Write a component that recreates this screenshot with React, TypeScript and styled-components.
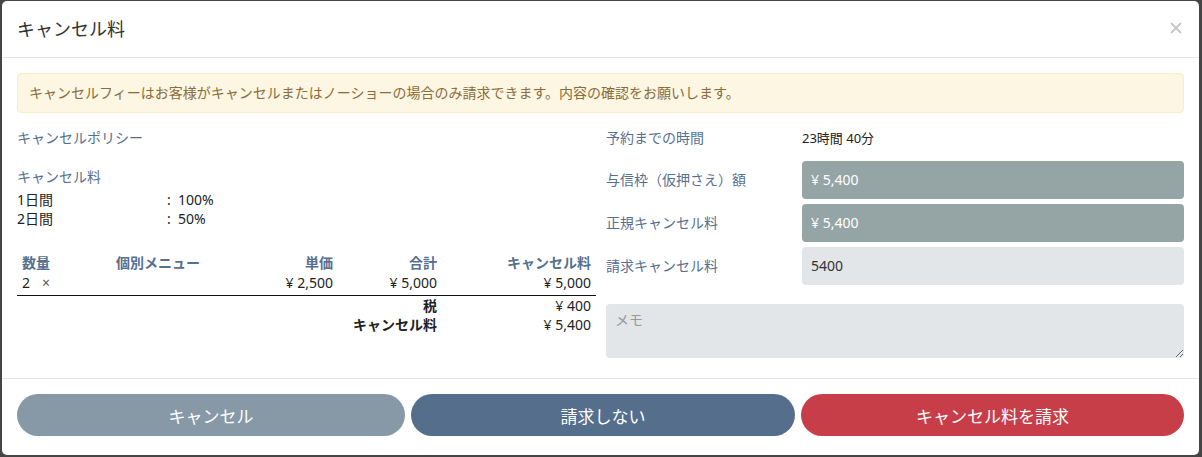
import React from "react";
import styled, { createGlobalStyle } from "styled-components";

const GlobalStyle = createGlobalStyle`
  html, body { margin: 0; padding: 0; }
  body {
    background: #454545;
    font-family: "Noto Sans", "Noto Sans CJK JP", sans-serif;
    font-size: 14px;
    color: #333;
  }
  * { box-sizing: border-box; }
`;

const Modal = styled.div`
  margin: 1px 0 0 2px;
  width: 1197px;
  height: 454px;
  background: #fff;
  border-radius: 5px;
  display: flex;
  flex-direction: column;
  overflow: hidden;
`;

const Header = styled.div`
  height: 57px;
  padding: 15px;
  border-bottom: 1px solid #e5e5e5;
  display: flex;
  align-items: center;
  justify-content: space-between;
`;

const Title = styled.h4`
  margin: 0;
  font-size: 18px;
  line-height: 26px;
  font-weight: 400;
  color: #333;
`;

const Close = styled.button`
  border: 0;
  background: transparent;
  padding: 0;
  width: 14px;
  height: 14px;
  margin-right: 1px;
  margin-top: -3px;
  display: flex;
  cursor: pointer;
`;

const Body = styled.div`
  padding: 15px 15px 20px;
  display: flex;
  flex-direction: column;
`;

const Alert = styled.div`
  height: 40px;
  padding: 9px 11px;
  line-height: 20px;
  font-size: 14px;
  background: #fcf6e2;
  border: 1px solid #f8ecc9;
  border-radius: 4px;
  color: #8a6d3b;
  margin-bottom: 15px;
`;

const Columns = styled.div`
  display: grid;
  grid-template-columns: 579px 578px;
  column-gap: 10px;
`;

const Column = styled.div`
  display: flex;
  flex-direction: column;
`;

const SectionLabel = styled.div<{ $mb: number }>`
  color: #56708f;
  line-height: 20px;
  margin-bottom: ${(p) => p.$mb}px;
`;

const PolicyRow = styled.div`
  display: grid;
  grid-template-columns: 150px 1fr;
  line-height: 19px;
  height: 19px;
  color: #222;
`;

const Table = styled.div`
  margin-top: 25px;
  display: grid;
  grid-template-columns: 94px 127px 100px 104px 154px;
`;

const Cell = styled.div<{ $align?: "left" | "right"; $head?: boolean; $bold?: boolean; $h: number; $line?: boolean }>`
  height: ${(p) => p.$h}px;
  line-height: ${(p) => p.$h}px;
  padding: 0 5px;
  text-align: ${(p) => p.$align || "left"};
  color: ${(p) => (p.$head ? "#56708f" : "#222")};
  font-weight: ${(p) => (p.$head || p.$bold ? 700 : 400)};
  white-space: nowrap;
  ${(p) => (p.$line ? "border-bottom: 1px solid #111; height: " + (p.$h + 4) + "px;" : "")}
`;

const Times = styled.span`
  margin-left: 12px;
  color: #555;
`;

const InfoRow = styled.div<{ $h: number; $mb: number }>`
  display: grid;
  grid-template-columns: 196px 1fr;
  align-items: center;
  height: ${(p) => p.$h}px;
  margin-bottom: ${(p) => p.$mb}px;
`;

const InfoLabel = styled.div`
  color: #56708f;
  line-height: 20px;
`;

const InfoValue = styled.div`
  color: #222;
  font-size: 13px;
  line-height: 20px;
`;

const Field = styled.div<{ $variant: "locked" | "edit" }>`
  height: 38px;
  border-radius: 4px;
  padding: 0 9px 2px;
  display: flex;
  align-items: center;
  background: ${(p) => (p.$variant === "locked" ? "#95a5a6" : "#e2e6e9")};
  color: ${(p) => (p.$variant === "locked" ? "#fff" : "#333")};
  font-size: 14px;
`;

const Memo = styled.textarea`
  margin-top: 19px;
  height: 54px;
  width: 100%;
  border: 0;
  border-radius: 4px;
  background: #e2e6e9;
  padding: 6px 9px;
  font-family: inherit;
  font-size: 14px;
  line-height: 20px;
  color: #333;
  resize: vertical;
  outline: none;
  display: block;
  &::placeholder { color: #999; }
`;

const Footer = styled.div`
  border-top: 1px solid #e5e5e5;
  padding: 15px 15px 19px;
  display: grid;
  grid-template-columns: 388px 384px 1fr;
  gap: 6px;
`;

const Button = styled.button<{ $bg: string }>`
  height: 42px;
  border: 0;
  border-radius: 21px;
  background: ${(p) => p.$bg};
  color: #fff;
  font-family: inherit;
  font-size: 17px;
  cursor: pointer;
`;

export default function App() {
  return (
    <>
      <GlobalStyle />
      <Modal>
        <Header>
          <Title>キャンセル料</Title>
          <Close aria-label="close">
            <svg width="14" height="14" viewBox="0 0 14 14">
              <path d="M2 2 L12 12 M12 2 L2 12" stroke="#c6c6c6" strokeWidth="1.8" />
            </svg>
          </Close>
        </Header>
        <Body>
          <Alert>
            キャンセルフィーはお客様がキャンセルまたはノーショーの場合のみ請求できます。内容の確認をお願いします。
          </Alert>
          <Columns>
            <Column>
              <SectionLabel $mb={19}>キャンセルポリシー</SectionLabel>
              <SectionLabel $mb={3}>キャンセル料</SectionLabel>
              <PolicyRow>
                <span>1日間</span>
                <span>:&nbsp;&nbsp;100%</span>
              </PolicyRow>
              <PolicyRow>
                <span>2日間</span>
                <span>:&nbsp;&nbsp;50%</span>
              </PolicyRow>
              <Table>
                <Cell $head $h={20}>数量</Cell>
                <Cell $head $h={20}>個別メニュー</Cell>
                <Cell $head $h={20} $align="right">単価</Cell>
                <Cell $head $h={20} $align="right">合計</Cell>
                <Cell $head $h={20} $align="right">キャンセル料</Cell>

                <Cell $h={19} $line>2<Times>×</Times></Cell>
                <Cell $h={19} $line></Cell>
                <Cell $h={19} $line $align="right">¥ 2,500</Cell>
                <Cell $h={19} $line $align="right">¥ 5,000</Cell>
                <Cell $h={19} $line $align="right">¥ 5,000</Cell>

                <Cell $h={19} />
                <Cell $h={19} />
                <Cell $h={19} />
                <Cell $h={19} $bold $align="right">税</Cell>
                <Cell $h={19} $align="right">¥ 400</Cell>

                <Cell $h={19} />
                <Cell $h={19} />
                <Cell $h={19} />
                <Cell $h={19} $bold $align="right">キャンセル料</Cell>
                <Cell $h={19} $align="right">¥ 5,400</Cell>
              </Table>
            </Column>
            <Column>
              <InfoRow $h={20} $mb={13}>
                <InfoLabel>予約までの時間</InfoLabel>
                <InfoValue>23時間 40分</InfoValue>
              </InfoRow>
              <InfoRow $h={38} $mb={5}>
                <InfoLabel>与信枠（仮押さえ）額</InfoLabel>
                <Field $variant="locked">¥ 5,400</Field>
              </InfoRow>
              <InfoRow $h={38} $mb={5}>
                <InfoLabel>正規キャンセル料</InfoLabel>
                <Field $variant="locked">¥ 5,400</Field>
              </InfoRow>
              <InfoRow $h={38} $mb={0}>
                <InfoLabel>請求キャンセル料</InfoLabel>
                <Field $variant="edit">5400</Field>
              </InfoRow>
              <Memo placeholder="メモ" />
            </Column>
          </Columns>
        </Body>
        <Footer>
          <Button $bg="#8799a7">キャンセル</Button>
          <Button $bg="#546e8c">請求しない</Button>
          <Button $bg="#c83e48">キャンセル料を請求</Button>
        </Footer>
      </Modal>
    </>
  );
}
